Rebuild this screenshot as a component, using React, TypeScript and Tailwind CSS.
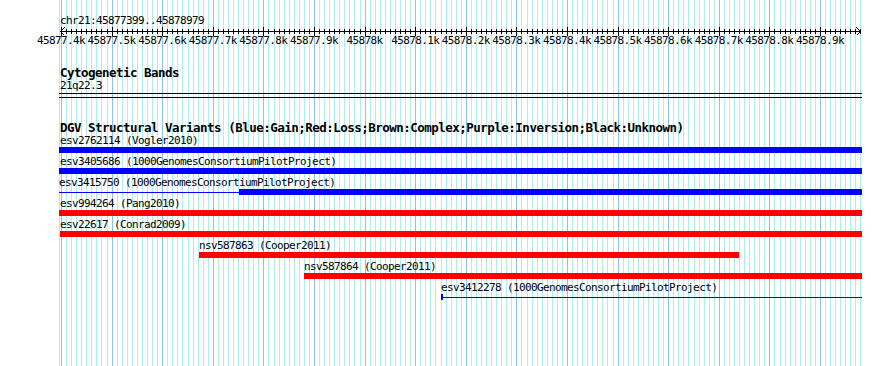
import React from "react";

// region chr21:45877399..45878979, about 0.506 px per bp
const PX_PER_BP = 0.506;
const ORIGIN = 61; // x of 45877400

const xOf = (bp: number) => Math.round(ORIGIN + (bp - 45877400) * PX_PER_BP);

const ticks = Array.from({ length: 159 }, (_, j) => 45877400 + j * 10);

const rulerLabels = [
  "45877.4k",
  "45877.5k",
  "45877.6k",
  "45877.7k",
  "45877.8k",
  "45877.9k",
  "45878k",
  "45878.1k",
  "45878.2k",
  "45878.3k",
  "45878.4k",
  "45878.5k",
  "45878.6k",
  "45878.7k",
  "45878.8k",
  "45878.9k",
];

type Variant = {
  id: string;
  study: string;
  offset: number; // from panel left
  color: string;
  kind: "full" | "split" | "line";
  width: number;
  split?: number;
};

const variants: Variant[] = [
  { id: "esv2762114", study: "Vogler2010", offset: 0, width: 803, color: "bg-[#0000ff]", kind: "full" },
  { id: "esv3405686", study: "1000GenomesConsortiumPilotProject", offset: 0, width: 803, color: "bg-[#0000ff]", kind: "full" },
  { id: "esv3415750", study: "1000GenomesConsortiumPilotProject", offset: 0, width: 803, split: 180, color: "bg-[#0000ff]", kind: "split" },
  { id: "esv994264", study: "Pang2010", offset: 0, width: 803, color: "bg-[#ff0000]", kind: "full" },
  { id: "esv22617", study: "Conrad2009", offset: 1, width: 802, color: "bg-[#ff0000]", kind: "full" },
  { id: "nsv587863", study: "Cooper2011", offset: 140, width: 540, color: "bg-[#ff0000]", kind: "full" },
  { id: "nsv587864", study: "Cooper2011", offset: 245, width: 558, color: "bg-[#ff0000]", kind: "full" },
  { id: "esv3412278", study: "1000GenomesConsortiumPilotProject", offset: 382, width: 421, color: "bg-[#0000ff]", kind: "line" },
];

const Grid = () => (
  <svg className="absolute inset-0" width={890} height={366} shapeRendering="crispEdges">
    <rect x={59} y={0} width={1} height={366} fill="#aeeeee" />
    {ticks.map((bp) => {
      const major = (bp - 45877400) % 100 === 0;
      return (
        <rect
          key={bp}
          x={xOf(bp)}
          y={0}
          width={1}
          height={366}
          fill={major ? "#88c2ec" : "#aeeeee"}
        />
      );
    })}
    {/* ruler */}
    <rect x={60} y={31} width={801} height={1} fill="#000" />
    {ticks.map((bp) => {
      const major = (bp - 45877400) % 100 === 0;
      return (
        <rect
          key={"t" + bp}
          x={xOf(bp)}
          y={major ? 27 : 29}
          width={1}
          height={major ? 9 : 5}
          fill="#000"
        />
      );
    })}
    <path d="M60.5 31.5 L64.5 27.5 M60.5 31.5 L64.5 35.5" stroke="#000" strokeWidth={1} />
    <path d="M860.5 31.5 L856.5 27.5 M860.5 31.5 L856.5 35.5" stroke="#000" strokeWidth={1} />
  </svg>
);

const small =
  "font-['DejaVu_Sans_Mono',monospace] text-[11px] tracking-[-0.62px] leading-[13px] h-[13px] whitespace-nowrap";
const bold =
  "font-['DejaVu_Sans_Mono',monospace] text-[12.5px] tracking-[-0.52px] font-bold leading-[13px] h-[13px] whitespace-nowrap";

const VariantRow = ({ v }: { v: Variant }) => (
  <div className="flex flex-col h-[21px]">
    <div className={small} style={{ marginLeft: v.kind === "full" && v.offset < 2 ? 1 : v.offset }}>
      {v.id} ({v.study})
    </div>
    {v.kind === "full" && (
      <div className={`h-[6px] ${v.color}`} style={{ marginLeft: v.offset, width: v.width }} />
    )}
    {v.kind === "split" && (
      <div className="flex items-center h-[6px]" style={{ width: v.width }}>
        <div className="h-px bg-[#0000ff]" style={{ width: v.split }} />
        <div className="h-[6px] bg-[#0000ff] flex-1" />
      </div>
    )}
    {v.kind === "line" && (
      <div className="flex items-center h-[6px]" style={{ marginLeft: v.offset, width: v.width }}>
        <div className="w-[2px] h-[6px] bg-[#0000ff]" />
        <div className="h-px bg-[#0000ff] flex-1" />
      </div>
    )}
  </div>
);

export default function App() {
  return (
    <div className="relative w-[890px] h-[366px] bg-white overflow-hidden text-black">
      <Grid />
      <div className="relative flex flex-col pt-[14px]">
        <div className={`${small} pl-[60px]`}>chr21:45877399..45878979</div>
        <div className="h-[7px]" />
        <div className="flex ml-[35.7px]">
          {rulerLabels.map((l) => (
            <div key={l} className={`${small} w-[50.6px] shrink-0 flex justify-center`}>
              {l}
            </div>
          ))}
        </div>
        <div className="h-[19px]" />
        <div className="flex flex-col ml-[59px] w-[803px]">
          <div className={`${bold} pl-px`}>Cytogenetic Bands</div>
          <div className={`${small} pl-px`}>21q22.3</div>
          <div className="h-px mt-px bg-black" />
          <div className="h-px mt-[3px] bg-black" />
          <div className="h-[23px]" />
          <div className={`${bold} pl-px`}>
            DGV Structural Variants (Blue:Gain;Red:Loss;Brown:Complex;Purple:Inversion;Black:Unknown)
          </div>
          {variants.map((v) => (
            <VariantRow key={v.id} v={v} />
          ))}
        </div>
      </div>
    </div>
  );
}
